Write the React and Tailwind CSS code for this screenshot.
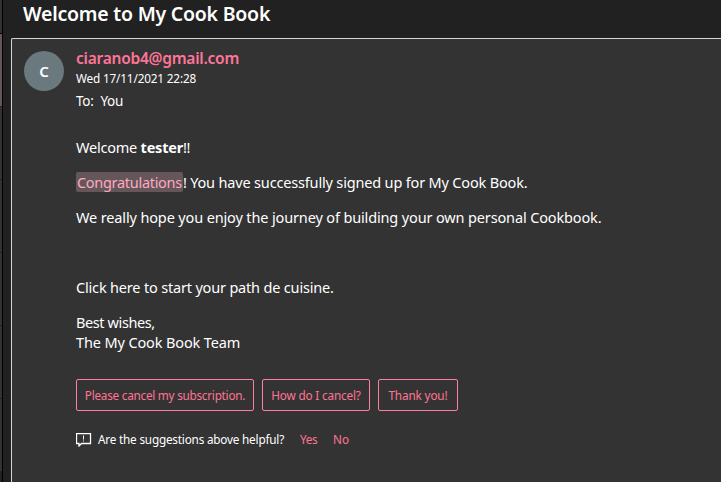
const suggestions = [
  { label: 'Please cancel my subscription.', box: 'w-[178px]', text: 'tracking-[-0.25px]' },
  { label: 'How do I cancel?', box: 'w-[108px]', text: 'tracking-[-0.17px]' },
  { label: 'Thank you!', box: 'w-20', text: 'tracking-[-0.15px]' },
];

function MessageList() {
  return (
    <div className="flex h-full w-[3px] shrink-0 flex-col border-r border-black bg-[#333333]">
      <div className="h-[33px]" />
      <div className="h-px bg-black" />
      <div className="h-[72px] bg-[#65565a]" />
      <div className="h-px bg-[#212121]" />
      <div className="h-[72px]" />
      <div className="h-px bg-[#212121]" />
      <div className="h-[72px]" />
      <div className="h-px bg-[#212121]" />
      <div className="h-[72px]" />
      <div className="h-px bg-[#212121]" />
      <div className="h-[72px]" />
      <div className="h-px bg-[#212121]" />
      <div className="h-[72px]" />
      <div className="flex-1 bg-[#212121]" />
    </div>
  );
}

function FeedbackIcon() {
  return (
    <svg width="16" height="14" viewBox="0 0 16 14" fill="none" stroke="white" className="shrink-0">
      <path d="M0.5 0.5H14.5V10.5H5.5L3 13V10.5H0.5Z" strokeWidth="1.3" />
      <path d="M7.5 2.5V6.5M7.5 7.5V8.5" />
    </svg>
  );
}

export default function App() {
  return (
    <div className="flex h-[482px] w-[721px] overflow-hidden bg-[#212121] font-['Noto_Sans',sans-serif] whitespace-nowrap text-white">
      <MessageList />
      <main className="flex min-w-0 flex-1 flex-col pl-2">
        <h1 className="h-[38px] shrink-0 pl-3 text-[19.5px] leading-7 font-semibold tracking-[-0.23px]">
          Welcome to My Cook Book
        </h1>
        <article className="flex min-h-0 flex-1 gap-3 rounded-tl-[2px] border-t border-l border-[#d6d6d6] bg-[#333333] pt-3 pl-3">
          <div className="flex size-10 shrink-0 items-center justify-center rounded-full bg-[#69797e] text-[15px] font-semibold">
            C
          </div>
          <div className="min-w-0 flex-1">
            <header>
              <div className="-mt-1 h-[22px] text-[15.5px] leading-[22px] font-semibold tracking-[-0.24px] text-[#ff7598]">
                ciaranob4@gmail.com
              </div>
              <div className="h-[19px] text-[11.75px] leading-[19px] tracking-[-0.16px]">Wed 17/11/2021 22:28</div>
              <div className="mt-[3px] flex h-5 gap-[7px] text-[13.5px] leading-5 tracking-[-0.3px]">
                <span>To:</span>
                <span>You</span>
              </div>
            </header>
            <div className="mt-[26px] text-[14.5px] leading-5">
              <p className="mb-[15px] tracking-[-0.22px]">
                Welcome <b>tester</b>!!
              </p>
              <p className="mb-[15px] tracking-[-0.17px]">
                <span className="inline-block h-5 rounded-[2px] bg-[#65565a] px-px align-top tracking-[-0.3px] text-[#ffa9c4]">Congratulations</span>
                ! You have successfully signed up for My Cook Book.
              </p>
              <p className="mb-[50px] tracking-[-0.14px]">
                We really hope you enjoy the journey of building your own personal Cookbook.
              </p>
              <p className="mb-[15px] tracking-[-0.18px]">Click here to start your path de cuisine.</p>
              <p>
                <span className="tracking-[-0.4px]">Best wishes,</span>
                <br />
                <span className="tracking-[-0.13px]">The My Cook Book Team</span>
              </p>
            </div>
            <div className="mt-[27px] flex gap-2">
              {suggestions.map((s) => (
                <button
                  key={s.label}
                  className={`flex h-8 items-center justify-center rounded-[2px] border border-[#ff7e9f] pt-px text-[11.75px] text-[#ff7395] ${s.box} ${s.text}`}
                >
                  {s.label}
                </button>
              ))}
            </div>
            <div className="mt-[18px] flex h-5 items-center text-[11.75px] leading-5">
              <div className="pt-0.5">
                <FeedbackIcon />
              </div>
              <span className="ml-1.5 w-[202px] tracking-[-0.2px]">Are the suggestions above helpful?</span>
              <a className="w-[33px] tracking-[-0.3px] text-[#ff7395]">Yes</a>
              <a className="text-[#ff7395]">No</a>
            </div>
          </div>
        </article>
      </main>
    </div>
  );
}
